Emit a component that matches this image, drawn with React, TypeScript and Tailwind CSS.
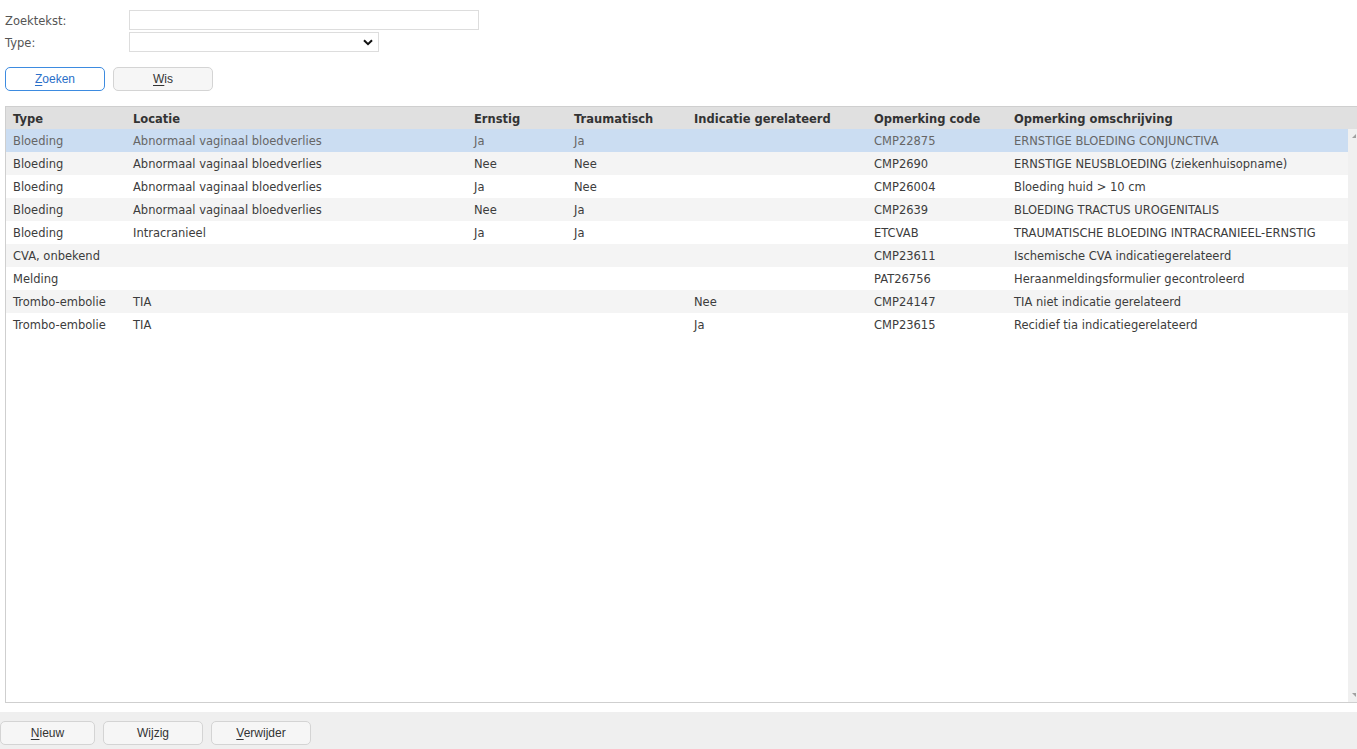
import React from 'react';

type Row = {
  type: string;
  locatie: string;
  ernstig: string;
  traumatisch: string;
  indicatie: string;
  code: string;
  omschrijving: string;
};

const rows: Row[] = [
  { type: 'Bloeding', locatie: 'Abnormaal vaginaal bloedverlies', ernstig: 'Ja', traumatisch: 'Ja', indicatie: '', code: 'CMP22875', omschrijving: 'ERNSTIGE BLOEDING CONJUNCTIVA' },
  { type: 'Bloeding', locatie: 'Abnormaal vaginaal bloedverlies', ernstig: 'Nee', traumatisch: 'Nee', indicatie: '', code: 'CMP2690', omschrijving: 'ERNSTIGE NEUSBLOEDING (ziekenhuisopname)' },
  { type: 'Bloeding', locatie: 'Abnormaal vaginaal bloedverlies', ernstig: 'Ja', traumatisch: 'Nee', indicatie: '', code: 'CMP26004', omschrijving: 'Bloeding huid > 10 cm' },
  { type: 'Bloeding', locatie: 'Abnormaal vaginaal bloedverlies', ernstig: 'Nee', traumatisch: 'Ja', indicatie: '', code: 'CMP2639', omschrijving: 'BLOEDING TRACTUS UROGENITALIS' },
  { type: 'Bloeding', locatie: 'Intracranieel', ernstig: 'Ja', traumatisch: 'Ja', indicatie: '', code: 'ETCVAB', omschrijving: 'TRAUMATISCHE BLOEDING INTRACRANIEEL-ERNSTIG' },
  { type: 'CVA, onbekend', locatie: '', ernstig: '', traumatisch: '', indicatie: '', code: 'CMP23611', omschrijving: 'Ischemische CVA indicatiegerelateerd' },
  { type: 'Melding', locatie: '', ernstig: '', traumatisch: '', indicatie: '', code: 'PAT26756', omschrijving: 'Heraanmeldingsformulier gecontroleerd' },
  { type: 'Trombo-embolie', locatie: 'TIA', ernstig: '', traumatisch: '', indicatie: 'Nee', code: 'CMP24147', omschrijving: 'TIA niet indicatie gerelateerd' },
  { type: 'Trombo-embolie', locatie: 'TIA', ernstig: '', traumatisch: '', indicatie: 'Ja', code: 'CMP23615', omschrijving: 'Recidief tia indicatiegerelateerd' },
];

const cols = [
  { key: 'type', label: 'Type', w: 'w-[120px]' },
  { key: 'locatie', label: 'Locatie', w: 'w-[341px]' },
  { key: 'ernstig', label: 'Ernstig', w: 'w-[100px]' },
  { key: 'traumatisch', label: 'Traumatisch', w: 'w-[120px]' },
  { key: 'indicatie', label: 'Indicatie gerelateerd', w: 'w-[180px]' },
  { key: 'code', label: 'Opmerking code', w: 'w-[140px]' },
  { key: 'omschrijving', label: 'Opmerking omschrijving', w: 'flex-1' },
] as const;

const Btn: React.FC<{ u: string; rest: string; primary?: boolean; w?: string }> = ({ u, rest, primary, w = 'w-[100px]' }) => (
  <button
    className={`h-[24px] ${w} rounded-[5px] border text-[12px] font-['Liberation_Sans',sans-serif] ${
      primary ? 'border-[#3d8be0] bg-white text-[#2a6fc9]' : 'border-[#d4d4d4] bg-[#f6f6f6] text-[#333]'
    }`}
  >
    <span className="underline underline-offset-2">{u}</span>
    {rest}
  </button>
);

export default function App() {
  return (
    <div className="flex h-[749px] w-[1357px] flex-col overflow-hidden bg-white font-['DejaVu_Sans',sans-serif] text-[11.5px] text-[#3c3c3c]">
      {/* search form */}
      <div className="px-[5px] pt-[10px]">
        <div className="flex h-[20px] items-center">
          <label className="w-[124px] pt-[3px] text-[#555]">Zoektekst:</label>
          <input className="h-[20px] w-[350px] border border-[#ddd] bg-white outline-none" />
        </div>
        <div className="mt-[2px] flex h-[20px] items-center">
          <label className="w-[124px] pt-[3px] text-[#555]">Type:</label>
          <div className="flex h-[20px] w-[250px] items-center justify-end border border-[#ddd] bg-white pr-[5px]">
            <svg width="10" height="7" viewBox="0 0 10 7">
              <path d="M1 1.2 L5 5.2 L9 1.2" fill="none" stroke="#111" strokeWidth="2" />
            </svg>
          </div>
        </div>
        <div className="mt-[15px] flex gap-[8px]">
          <Btn u="Z" rest="oeken" primary />
          <Btn u="W" rest="is" />
        </div>
      </div>

      {/* grid */}
      <div className="ml-[5px] mt-[15px] flex h-[597px] flex-col border border-r-0 border-[#cfcfcf]">
        <div className="flex h-[22px] items-center bg-[#e0e0e0] pt-[3px] font-bold text-[#333]">
          {cols.map((c) => (
            <div key={c.key} className={`${c.w} shrink-0 pl-[7px]`}>
              {c.label}
            </div>
          ))}
        </div>
        <div className="flex min-h-0 flex-1">
          <div className="flex-1">
            {rows.map((r, i) => (
              <div
                key={i}
                className={`flex h-[23px] items-center pt-[3px] ${
                  i === 0 ? 'bg-[#cbddf2] text-[#666]' : i % 2 === 1 ? 'bg-[#f4f4f4]' : 'bg-white'
                }`}
              >
                {cols.map((c) => (
                  <div key={c.key} className={`${c.w} shrink-0 truncate pl-[7px]`}>
                    {(r as any)[c.key]}
                  </div>
                ))}
              </div>
            ))}
          </div>
          <div className="flex w-[9px] flex-col justify-between bg-[#f0f0f0] py-[4px]">
            <svg width="9" height="6" viewBox="0 0 9 6">
              <path d="M8 1 L8 5 L4 5 Z" fill="#a0a0a0" />
            </svg>
            <svg width="9" height="6" viewBox="0 0 9 6">
              <path d="M8 1 L8 5 L4 1 Z" fill="#a0a0a0" />
            </svg>
          </div>
        </div>
      </div>

      {/* bottom toolbar */}
      <div className="mt-[9px] flex flex-1 gap-[8px] bg-[#efefef] pt-[9px]">
        <Btn u="N" rest="ieuw" w="w-[95px]" />
        <Btn u="" rest="Wijzig" />
        <Btn u="V" rest="erwijder" />
      </div>
    </div>
  );
}
